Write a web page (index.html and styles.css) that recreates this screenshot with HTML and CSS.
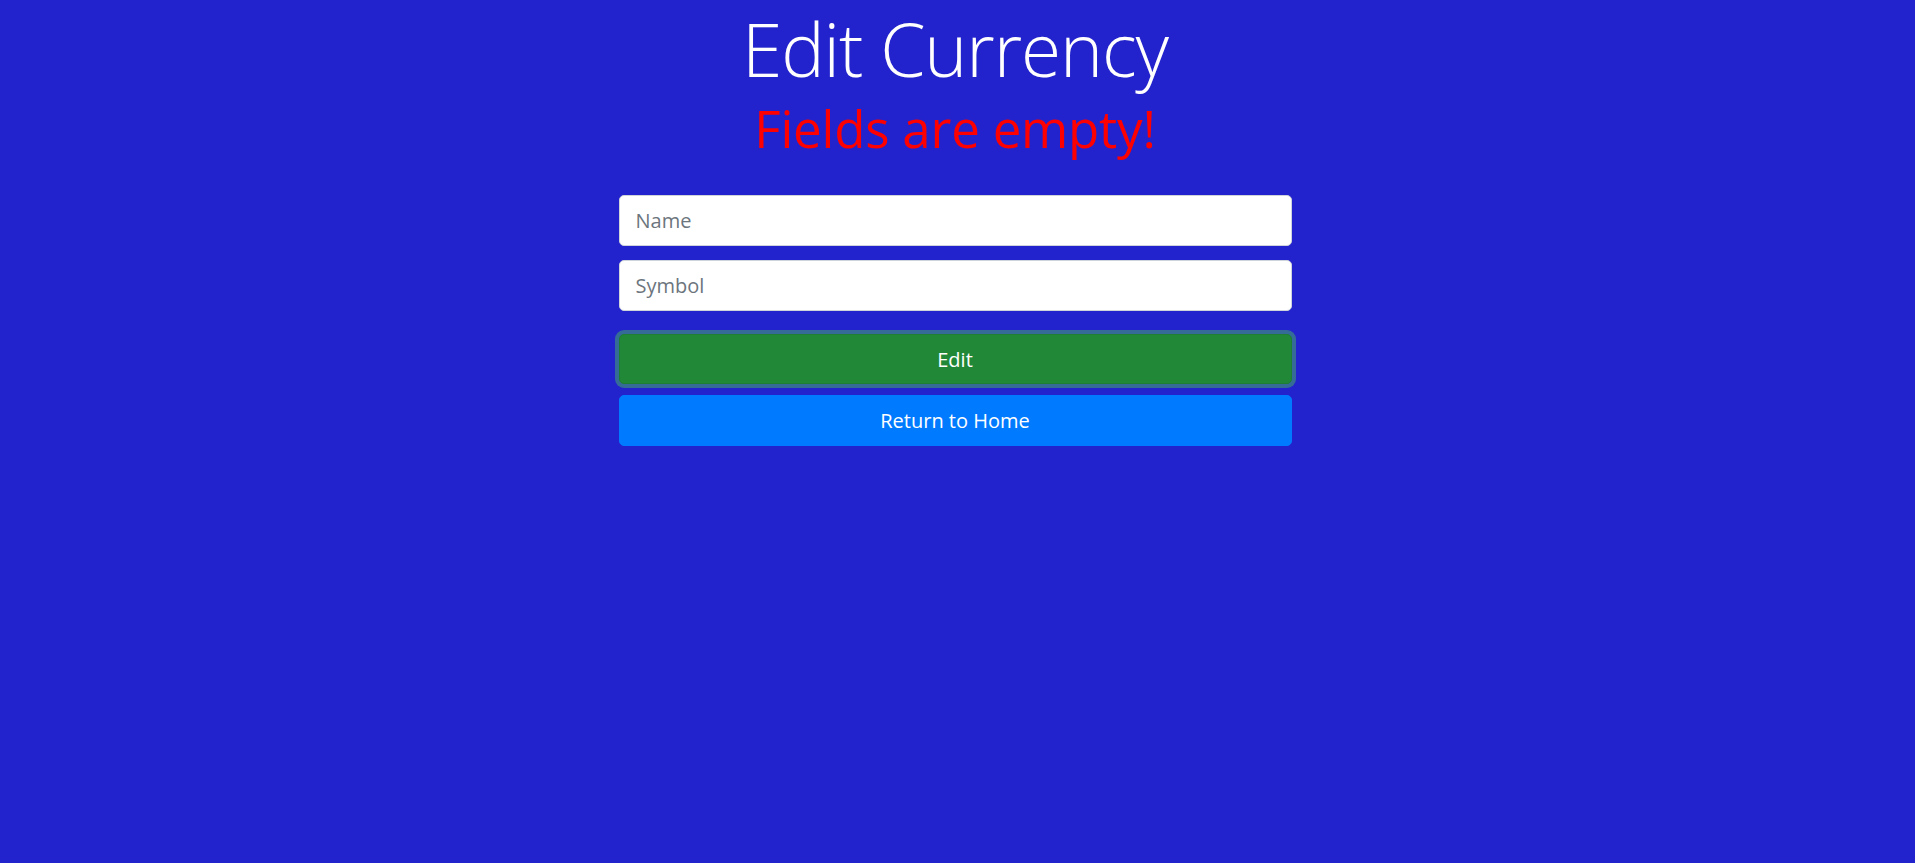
FILE: index.html
```html
<!DOCTYPE html>
<html lang="en">
<head>
<meta charset="utf-8">
<title>Edit Currency</title>
<link rel="stylesheet" href="styles.css">
</head>
<body>
<main class="page">
  <h1 class="title">Edit Currency</h1>
  <h2 class="error">Fields are empty!</h2>
  <form class="form">
    <input class="field" type="text" placeholder="Name">
    <input class="field" type="text" placeholder="Symbol">
    <button class="btn btn-edit" type="button">Edit</button>
    <a class="btn btn-home" href="#">Return to Home</a>
  </form>
</main>
</body>
</html>
```

FILE: styles.css
```css
html, body {
  margin: 0;
  padding: 0;
}

body {
  background: #2323cd;
  font-family: "Open Sans", "Noto Sans", "Liberation Sans", sans-serif;
  min-height: 100vh;
}

.page {
  display: flex;
  flex-direction: column;
  align-items: center;
  padding: 4px 5px 0 0;
}

.title {
  margin: 0;
  font-weight: 300;
  font-size: 73px;
  letter-spacing: -1.1px;
  line-height: 89px;
  color: #ffffff;
}

.error {
  margin: 4px 0 0;
  font-weight: 400;
  font-size: 51px;
  letter-spacing: -0.2px;
  line-height: 62px;
  color: #ff0000;
}

.form {
  width: 673px;
  margin-top: 36px;
  display: flex;
  flex-direction: column;
}

.field {
  box-sizing: border-box;
  height: 51px;
  border: 1px solid #ced4da;
  border-radius: 5px;
  padding: 0 16px;
  font-family: inherit;
  font-size: 20px;
  color: #495057;
  background: #ffffff;
  outline: none;
}

.field::placeholder {
  color: #6c757d;
}

.field + .field {
  margin-top: 14px;
}

.btn {
  box-sizing: border-box;
  height: 50px;
  display: flex;
  align-items: center;
  justify-content: center;
  border-radius: 5px;
  font-family: inherit;
  font-size: 20px;
  color: #ffffff;
  text-decoration: none;
  cursor: pointer;
}

.btn-edit {
  margin-top: 23px;
  background: #218838;
  border: 1px solid #1e7e34;
  box-shadow: 0 0 0 4px rgba(72, 180, 97, 0.5);
}

.btn-home {
  margin-top: 11px;
  height: 51px;
  background: #007bff;
  border: 1px solid #007bff;
}
```
